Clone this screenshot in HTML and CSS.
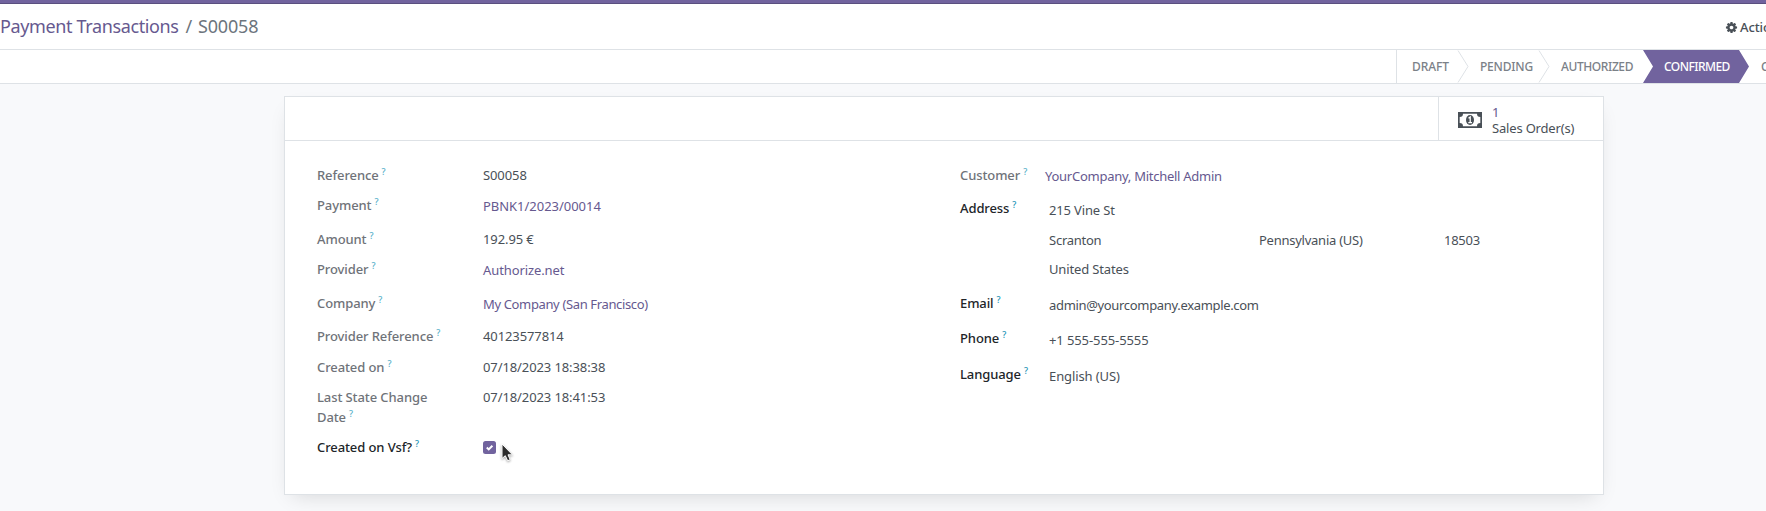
FILE: index.html
```html
<!DOCTYPE html>
<html lang="en">
<head>
<meta charset="utf-8">
<title>Payment Transactions / S00058</title>
<link rel="stylesheet" href="styles.css">
</head>
<body>
<div class="topbar"></div>
<header class="control">
  <div class="crumbs"><a class="crumb-link">Payment Transactions</a><span class="slash">/</span><span class="crumb-cur">S00058</span></div>
  <div class="action">
    <svg class="gear" viewBox="0 0 1792 1792"><path fill="currentColor" d="M1152 896q0-106-75-181t-181-75-181 75-75 181 75 181 181 75 181-75 75-181zm512-109v222q0 12-8 23t-20 13l-185 28q-19 54-39 91 35 50 107 138 10 12 10 25t-9 23q-27 37-99 108t-94 71q-12 0-26-9l-138-108q-44 23-91 38-16 136-29 186-7 28-36 28h-222q-14 0-24.500-8.500t-11.500-21.500l-28-184q-49-16-90-37l-141 107q-10 9-25 9-14 0-25-11-126-114-165-168-7-10-7-23 0-12 8-23 15-21 51-66.500t54-70.500q-27-50-41-99l-183-27q-13-2-21-12.500t-8-23.500v-222q0-12 8-23t19-13l186-28q14-46 39-92-40-57-107-138-10-12-10-24 0-10 9-23 26-36 98.500-107.500t94.500-71.500q13 0 26 10l138 107q44-23 91-38 16-136 29-186 7-28 36-28h222q14 0 24.500 8.500t11.500 21.500l28 184q49 16 90 37l142-107q9-9 24-9 13 0 25 10 129 119 165 170 7 8 7 22 0 12-8 23-15 21-51 66.500t-54 70.500q26 50 41 98l183 28q13 2 21 12.500t8 23.500z"/></svg>
    <span>Action</span>
  </div>
</header>
<nav class="status">
  <div class="step draft">DRAFT</div>
  <svg class="chev" viewBox="0 0 12 33"><path d="M1 0.500L11 16.500L1 32.500"/></svg>
  <div class="step pending">PENDING</div>
  <svg class="chev" viewBox="0 0 12 33"><path d="M1 0.500L11 16.500L1 32.500"/></svg>
  <div class="step authorized">AUTHORIZED</div>
  <div class="step confirmed">CONFIRMED</div>
  <div class="step canceled">CANCELED</div>
</nav>
<main class="sheet">
  <div class="buttons">
    <div class="stat">
      <svg class="money" viewBox="0 0 24 16"><path fill="currentColor" fill-rule="evenodd" d="M0 0H24V16H0ZM5 1.700A3.300 3.300 0 0 1 1.700 5V11A3.300 3.300 0 0 1 5 14.300H19A3.300 3.300 0 0 1 22.300 11V5A3.300 3.300 0 0 1 19 1.700Z"/><ellipse cx="12" cy="8" rx="4" ry="5" fill="currentColor"/><path d="M10.500 6.300L12.200 5V10.500M10.300 10.700H14" fill="none" stroke="#fff" stroke-width="1.300"/></svg>
      <div class="stat-text"><span class="stat-num">1</span><span>Sales Order(s)</span></div>
    </div>
  </div>
  <div class="body">
    <div class="group left">
      <div class="label ro">Reference<sup>?</sup></div><div class="val num">S00058</div>
      <div class="label ro">Payment<sup>?</sup></div><div class="val link pbnk">PBNK1/2023/00014</div>
      <div class="label ro">Amount<sup>?</sup></div><div class="val num">192.95 €</div>
      <div class="label ro">Provider<sup>?</sup></div><div class="val link">Authorize.net</div>
      <div class="label ro">Company<sup>?</sup></div><div class="val link company">My Company (San Francisco)</div>
      <div class="label ro">Provider Reference<sup>?</sup></div><div class="val num">40123577814</div>
      <div class="label ro">Created on<sup>?</sup></div><div class="val num">07/18/2023 18:38:38</div>
      <div class="label ro">Last State Change<br>Date<sup>?</sup></div><div class="val num">07/18/2023 18:41:53</div>
      <div class="label">Created on Vsf?<sup>?</sup></div>
      <div class="val"><span class="check"><svg viewBox="0 0 13 13"><path d="M3.800 6.600L5.700 8.400L9.400 4.700"/></svg></span></div>
    </div>
    <div class="group right">
      <div class="label ro">Customer<sup>?</sup></div><div class="val link cust">YourCompany, Mitchell Admin</div>
      <div class="label">Address<sup>?</sup></div>
      <div class="val address">
        <div>215 Vine St</div>
        <div class="city"><span>Scranton</span><span>Pennsylvania (US)</span><span>18503</span></div>
        <div>United States</div>
      </div>
      <div class="label">Email<sup>?</sup></div><div class="val low email">admin@yourcompany.example.com</div>
      <div class="label">Phone<sup>?</sup></div><div class="val low">+1 555-555-5555</div>
      <div class="label">Language<sup>?</sup></div><div class="val low">English (US)</div>
    </div>
  </div>
</main>
<svg class="cursor" viewBox="0 0 14 20"><path d="M1 1V15.500L4.300 12.700L6.700 17.800L9.200 16.600L7 11.800H11.500Z"/></svg>
</body>
</html>
```
FILE: styles.css
```css
* { box-sizing: border-box; }
body {
  margin: 0;
  width: 1766px;
  height: 511px;
  overflow: hidden;
  background: #f8f9fb;
  color: #495057;
  font: 13px/20px "Noto Sans", "Open Sans", sans-serif;
  letter-spacing: -0.1px;
}
.topbar { height: 4px; background: #71639e; border-bottom: 1px solid #5a4f7f; }
.control {
  height: 46px;
  background: #fff;
  border-bottom: 1px solid #dee2e6;
  display: flex;
  justify-content: space-between;
  white-space: nowrap;
}
.crumbs { font-size: 18px; line-height: 24px; padding-top: 10px; letter-spacing: -0.200px; }
.crumb-link { color: #66598f; letter-spacing: -0.370px; }
.slash { color: #6c757d; margin: 0 6px 0 7px; }
.crumb-cur { color: #6c757d; }
.action {
  width: 41px;
  display: flex;
  gap: 2px;
  padding-top: 13px;
  font-weight: 500;
  color: #495057;
}
.gear { width: 13px; height: 13px; flex: none; margin-top: 4px; }
.status {
  height: 34px;
  background: #fff;
  border-bottom: 1px solid #dee2e6;
  display: flex;
  padding-left: 1396px;
  font-size: 12px;
  font-weight: 500;
  line-height: 33px;
  color: #7b8188;
  white-space: nowrap;
  overflow: hidden;
}
.step { flex: none; height: 33px; }
.draft { width: 61px; padding-left: 15px; border-left: 1px solid #dee2e6; }
.chev { width: 12px; height: 33px; flex: none; fill: none; stroke: #dee2e6; }
.pending { width: 69px; padding-left: 11px; letter-spacing: -0.2px; }
.authorized { width: 93px; padding-left: 11px; letter-spacing: -0.4px; }
.confirmed {
  width: 106px;
  padding-left: 21px;
  background: #71639e;
  color: #fff;
  letter-spacing: -0.5px;
  letter-spacing: -0.55px;
  clip-path: polygon(0 0, 96px 0, 106px 50%, 96px 100%, 0 100%, 10px 50%);
}
.canceled { padding-left: 12px; }
.sheet {
  width: 1320px;
  height: 399px;
  margin: 12px 0 0 284px;
  background: #fff;
  border: 1px solid #dee2e6;
  box-shadow: 0 8px 20px -8px rgba(0, 0, 0, .15);
}
.buttons {
  height: 44px;
  border-bottom: 1px solid #dee2e6;
  display: flex;
  justify-content: flex-end;
}
.stat { width: 165px; border-left: 1px solid #dee2e6; display: flex; padding: 7px 0 0 19px; gap: 10px; }
.money { width: 24px; height: 16px; margin-top: 8px; }
.stat-text { display: flex; flex-direction: column; line-height: 16px; letter-spacing: -0.18px; }
.stat-num { color: #66598f; }
.body { display: flex; padding: 24px 0 0 32px; white-space: nowrap; }
.group { display: grid; align-content: start; }
.left {
  width: 643px;
  grid-template-columns: 166px 1fr;
  grid-template-rows: 30px 34px 30px 34px 33px 31px 30px 50px 20px;
}
.right {
  grid-template-columns: 85px 1fr;
  grid-template-rows: 33px 95px 35px 36px 20px;
}
.label { font-weight: 500; color: #212529; letter-spacing: -0.1px; }
.ro { color: #6f7379; }
sup {
  font-size: 9px;
  line-height: 0;
  vertical-align: 5px;
  margin-left: 3px;
  color: #1a93b5;
}
.ro sup { color: #58b0c9; }
.link { color: #66598f; padding-top: 1px; }
.pbnk { letter-spacing: -0.03px; }
.company { letter-spacing: -0.36px; }
.cust { letter-spacing: -0.26px; }
.low { padding: 2px 0 0 4px; }
.email { letter-spacing: -0.33px; }
.address { display: grid; grid-template-rows: 30px 29px 20px; padding: 2px 0 0 4px; align-content: start; letter-spacing: -0.150px; }
.city { display: grid; grid-template-columns: 210px 185px auto; letter-spacing: -0.25px; }
.check {
  display: block;
  width: 13px;
  height: 13px;
  margin-top: 4px;
  border-radius: 2.500px;
  background: #71639e;
}
.check svg { display: block; fill: none; stroke: #fff; stroke-width: 2; }
.cursor {
  position: absolute;
  left: 501px;
  top: 443px;
  width: 14px;
  height: 20px;
  fill: #2b2b2b;
  stroke: #fff;
  stroke-width: 1;
  filter: drop-shadow(0 1px 1px rgba(0, 0, 0, .35));
}
```
